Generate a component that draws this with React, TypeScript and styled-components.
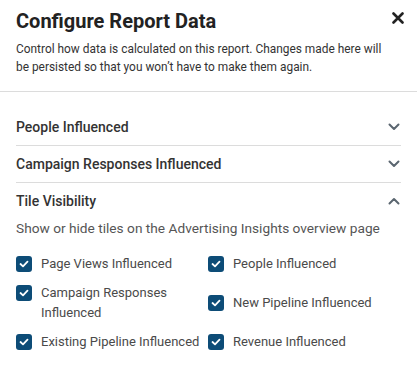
import styled, { createGlobalStyle } from "styled-components";

const GlobalStyle = createGlobalStyle`
  html, body {
    margin: 0;
    padding: 0;
    background: #ffffff;
  }
  body {
    font-family: Roboto, "Liberation Sans", Arial, sans-serif;
    -webkit-font-smoothing: antialiased;
  }
`;

const Panel = styled.div`
  width: 417px;
  height: 370px;
  background: #ffffff;
  overflow: hidden;
`;

const Header = styled.div`
  padding: 9px 16px 15px 16px;
  border-bottom: 1px solid #dcdcdc;
`;

const TitleRow = styled.div`
  display: flex;
  justify-content: space-between;
  align-items: flex-start;
`;

const Title = styled.h1`
  margin: 0;
  font-size: 20px;
  line-height: 24px;
  font-weight: 700;
  color: #222222;
`;

const CloseButton = styled.button`
  display: flex;
  align-items: center;
  justify-content: center;
  width: 12px;
  height: 12px;
  margin: 3px -3px 0 0;
  padding: 0;
  border: none;
  background: none;
  cursor: pointer;
`;

const Intro = styled.p`
  margin: 7px 0 0 0;
  max-width: 370px;
  font-size: 11.9px;
  line-height: 18px;
  color: #333333;
`;

const Body = styled.div`
  padding: 17px 16px 0 16px;
`;

const Section = styled.div<{ $divider?: boolean }>`
  border-bottom: ${(p) => (p.$divider ? "1px solid #dcdcdc" : "none")};
`;

const SectionHeader = styled.div`
  display: flex;
  align-items: center;
  justify-content: space-between;
  height: 36px;
  cursor: pointer;
`;

const SectionTitle = styled.span`
  font-size: 14px;
  font-weight: 500;
  color: #333333;
`;

const SectionHint = styled.p`
  margin: 0;
  font-size: 13.7px;
  line-height: 18px;
  color: #555555;
`;

const TileGrid = styled.div`
  display: grid;
  grid-template-columns: 192px 192px;
  row-gap: 9px;
  align-items: center;
  margin-top: 17px;
`;

const TileOption = styled.label`
  display: flex;
  align-items: flex-start;
  gap: 9px;
  font-size: 13px;
  line-height: 20px;
  color: #4a4a4a;
  cursor: pointer;
`;

const Box = styled.span`
  flex: none;
  display: flex;
  align-items: center;
  justify-content: center;
  width: 16px;
  height: 16px;
  margin-top: 2px;
  border-radius: 3px;
  background: #0d4c77;
`;

const Chevron = ({ up }: { up?: boolean }) => (
  <svg width="12" height="8" viewBox="0 0 12 8" style={{ marginRight: 1 }}>
    <path
      d={up ? "M1.5 6.5 L6 2 L10.5 6.5" : "M1.5 1.5 L6 6 L10.5 1.5"}
      fill="none"
      stroke="#5b6670"
      strokeWidth="2"
      strokeLinecap="round"
      strokeLinejoin="round"
    />
  </svg>
);

const Check = () => (
  <svg width="10" height="8" viewBox="0 0 10 8">
    <path
      d="M1.5 4 L4 6.3 L8.5 1.7"
      fill="none"
      stroke="#ffffff"
      strokeWidth="1.8"
      strokeLinecap="round"
      strokeLinejoin="round"
    />
  </svg>
);

const tiles = [
  "Page Views Influenced",
  "People Influenced",
  "Campaign Responses Influenced",
  "New Pipeline Influenced",
  "Existing Pipeline Influenced",
  "Revenue Influenced",
];

const App = () => {
  return (
    <Panel>
      <GlobalStyle />
      <Header>
        <TitleRow>
          <Title>Configure Report Data</Title>
          <CloseButton aria-label="Close">
            <svg width="12" height="12" viewBox="0 0 12 12">
              <path
                d="M1.5 1.5 L10.5 10.5 M10.5 1.5 L1.5 10.5"
                stroke="#222222"
                strokeWidth="2.6"
                strokeLinecap="round"
              />
            </svg>
          </CloseButton>
        </TitleRow>
        <Intro>
          Control how data is calculated on this report. Changes made here will be persisted
          so that you won’t have to make them again.
        </Intro>
      </Header>
      <Body>
        <Section $divider>
          <SectionHeader>
            <SectionTitle>People Influenced</SectionTitle>
            <Chevron />
          </SectionHeader>
        </Section>
        <Section $divider>
          <SectionHeader>
            <SectionTitle>Campaign Responses Influenced</SectionTitle>
            <Chevron />
          </SectionHeader>
        </Section>
        <Section>
          <SectionHeader>
            <SectionTitle>Tile Visibility</SectionTitle>
            <Chevron up />
          </SectionHeader>
          <SectionHint>Show or hide tiles on the Advertising Insights overview page</SectionHint>
          <TileGrid>
            {tiles.map((t) => (
              <TileOption key={t}>
                <Box>
                  <Check />
                </Box>
                <span>{t}</span>
              </TileOption>
            ))}
          </TileGrid>
        </Section>
      </Body>
    </Panel>
  );
};

export default App;
